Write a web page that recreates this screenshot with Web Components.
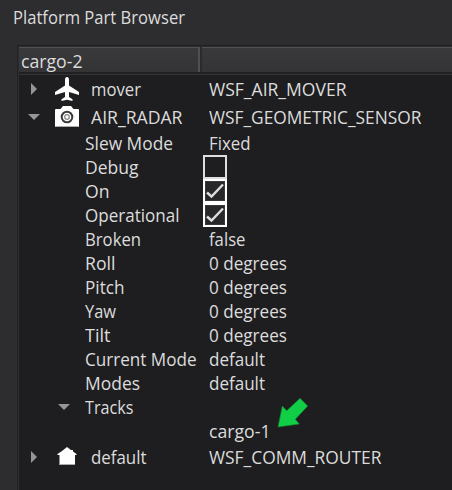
<!DOCTYPE html>
<html lang="en"><head><meta charset="utf-8"><title>Platform Part Browser</title>
<style>
html,body{margin:0;width:452px;height:490px;overflow:hidden;background:#2d2d2f}
body{font:18px/24px "Open Sans","Noto Sans",sans-serif;color:#dcdcdc}
</style></head><body>
<part-browser></part-browser>
<script>
const define=(name,html,setup)=>customElements.define(name,class extends HTMLElement{
  connectedCallback(){
    if(this.shadowRoot)return;
    const t=document.createElement('template');t.innerHTML=html;
    this.attachShadow({mode:'open'}).append(t.content.cloneNode(true));
    if(setup)setup(this,this.shadowRoot);
  }
});
// Text condensed horizontally to the width given in "w".
define('fit-text',`<style>:host{display:block;white-space:nowrap;height:24px}span{display:inline-block;transform-origin:0 50%;line-height:24px}</style><span><slot></slot></span>`,
 (el,r)=>{const s=r.querySelector('span');const n=s.getBoundingClientRect().width;if(n)s.style.transform=`scaleX(${+el.getAttribute('w')/n})`;});
define('tree-arrow',`<style>:host{display:block;width:12px;height:12px}svg{display:block}path{fill:#969698}</style><svg width="12" height="12"><path/></svg>`,
 (el,r)=>r.querySelector('path').setAttribute('d',el.hasAttribute('open')?'M0 3H12L6 9Z':'M3 0V12L9 6Z'));
const icons={
 plane:'<path d="M12 0C13.2 0 14 1.2 14 3V8.5L24 15V18L14 15V20L17.5 22.3V24L12 22.8L6.500 24V22.300L10 20V15L0 18V15L10 8.500V3C10 1.200 10.800 0 12 0Z" fill="#fff"/>',
 camera:'<path d="M1 4H5.500L8 1H16L18.500 4H23Q24 4 24 5V21Q24 22 23 22H1Q0 22 0 21V5Q0 4 1 4Z" fill="#fff"/><path d="M0.500 21.500H23.500" stroke="#aaa"/><circle cx="12" cy="12" r="5.300" fill="#fff" stroke="#3b3b3d" stroke-width="2"/><circle cx="12" cy="12" r="2.300" fill="#fff" stroke="#8a8a8a" stroke-width="1.300"/>',
 home:'<path d="M12 2L16 5H18V6.500L21.500 9V10H20V20H4.500V10H2.500V9L7 6Z" fill="#fff"/><path d="M4.500 19.500H20" stroke="#aaa"/>'
};
define('part-icon',`<style>:host{display:block;width:24px;height:24px}svg{display:block}</style><svg width="24" height="24"></svg>`,
 (el,r)=>r.querySelector('svg').innerHTML=icons[el.getAttribute('name')]);
define('check-box',`<style>:host{display:block;box-sizing:border-box;width:24px;height:24px;border:2px solid #dededf;margin-left:-6px}:host([checked]){border-color:#fff;background:#272729}svg{display:none}:host([checked]) svg{display:block}</style><svg width="20" height="20"><rect x=".5" y=".5" width="19" height="19" fill="none" stroke="#39393b"/><path d="M2 11.500L6.500 15.500L18 3.500" fill="none" stroke="#dcdcdc" stroke-width="2.500"/></svg>`);
define('tree-row',`<style>
:host{display:grid;grid-template-columns:190px 1fr;height:24px}
:host([part-row]){height:28px;align-items:center}
.name{display:flex;align-items:center;padding-left:var(--indent,65.500px);height:24px}
</style><div class="name"><slot name="name"></slot></div><slot></slot>`);
define('tree-header',`<style>
:host{display:grid;grid-template-columns:181px 1fr;column-gap:2px;height:25px;background:#2b2b2d;border-bottom:2px solid #202022}
div{box-sizing:border-box;border-top:1px solid #505052;background:linear-gradient(#39393b,#343436);height:25px}
.name{border-right:2px solid #505052;padding:1px 0 0 1.800px}
</style><div class="name"><slot></slot></div><div></div>`);
define('pointer-arrow',`<style>:host{position:absolute;left:277px;top:397px}svg{display:block}</style><svg width="32" height="31"><path d="M1 30L5.300 9L9.700 13.700L23 1.300L30.700 9L18.300 22.300L22.300 27Z" fill="#10cf46" stroke="#12852f" stroke-width=".600"/></svg>`);
const props=[['Slew Mode',88,'Fixed',41.5],['Debug',53.5,false],['On',24.5,true],['Operational',94.5,true],['Broken',56,'false',36.5],['Roll',30.5,'0 degrees',78],['Pitch',39.5,'0 degrees',78],['Yaw',31,'0 degrees',78],['Tilt',25.5,'0 degrees',78],['Current Mode',111.5,'default',56],['Modes',55,'default',56]];
const fit=(t,w,s='')=>`<fit-text w="${w}" ${s}>${t}</fit-text>`;
const part=(icon,open,n,w,v,vw)=>`<tree-row part-row><div slot="name" class="part"><tree-arrow ${open?'open':''}></tree-arrow><part-icon name="${icon}"></part-icon>${fit(n,w)}</div>${fit(v,vw)}</tree-row>`;
define('part-browser',`<style>
:host{display:block;width:452px;height:490px;background:#2d2d2f;overflow:hidden}
.title{height:45px;box-sizing:border-box;padding:5px 0 0 12.500px}
.panel{box-sizing:border-box;margin-left:17px;height:445px;border-left:1px solid #232325;border-top:1px solid #202022;padding:1px 0 0 1px;background:#2d2d2f}
.tree{background:#1e1e20;border-top:1px solid #343436;height:420px}
.part{display:flex;align-items:center;margin-left:-56.500px}
.part part-icon{margin:0 11.500px 0 15px}
.tracks{display:flex;align-items:center;margin-left:-27px;gap:15px}
</style><div class="title">${fit('Platform Part Browser',172)}</div>
<div class="panel"><tree-header>${fit('cargo-2',61.5)}</tree-header><div class="tree">
${part('plane',false,'mover',50,'WSF_AIR_MOVER',137.5)}
${part('camera',true,'AIR_RADAR',91.5,'WSF_GEOMETRIC_SENSOR',212.5)}
${props.map(p=>`<tree-row>${fit(p[0],p[1],'slot="name"')}${typeof p[2]==='string'?fit(p[2],p[3]):`<check-box ${p[2]?'checked':''}></check-box>`}</tree-row>`).join('')}
<tree-row><div slot="name" class="tracks"><tree-arrow open></tree-arrow>${fit('Tracks',48.5)}</div></tree-row>
<tree-row>${fit('cargo-1',61.5)}</tree-row>
${part('home',false,'default',55.5,'WSF_COMM_ROUTER',172.5)}
</div></div><pointer-arrow></pointer-arrow>`);
</script></body></html>
